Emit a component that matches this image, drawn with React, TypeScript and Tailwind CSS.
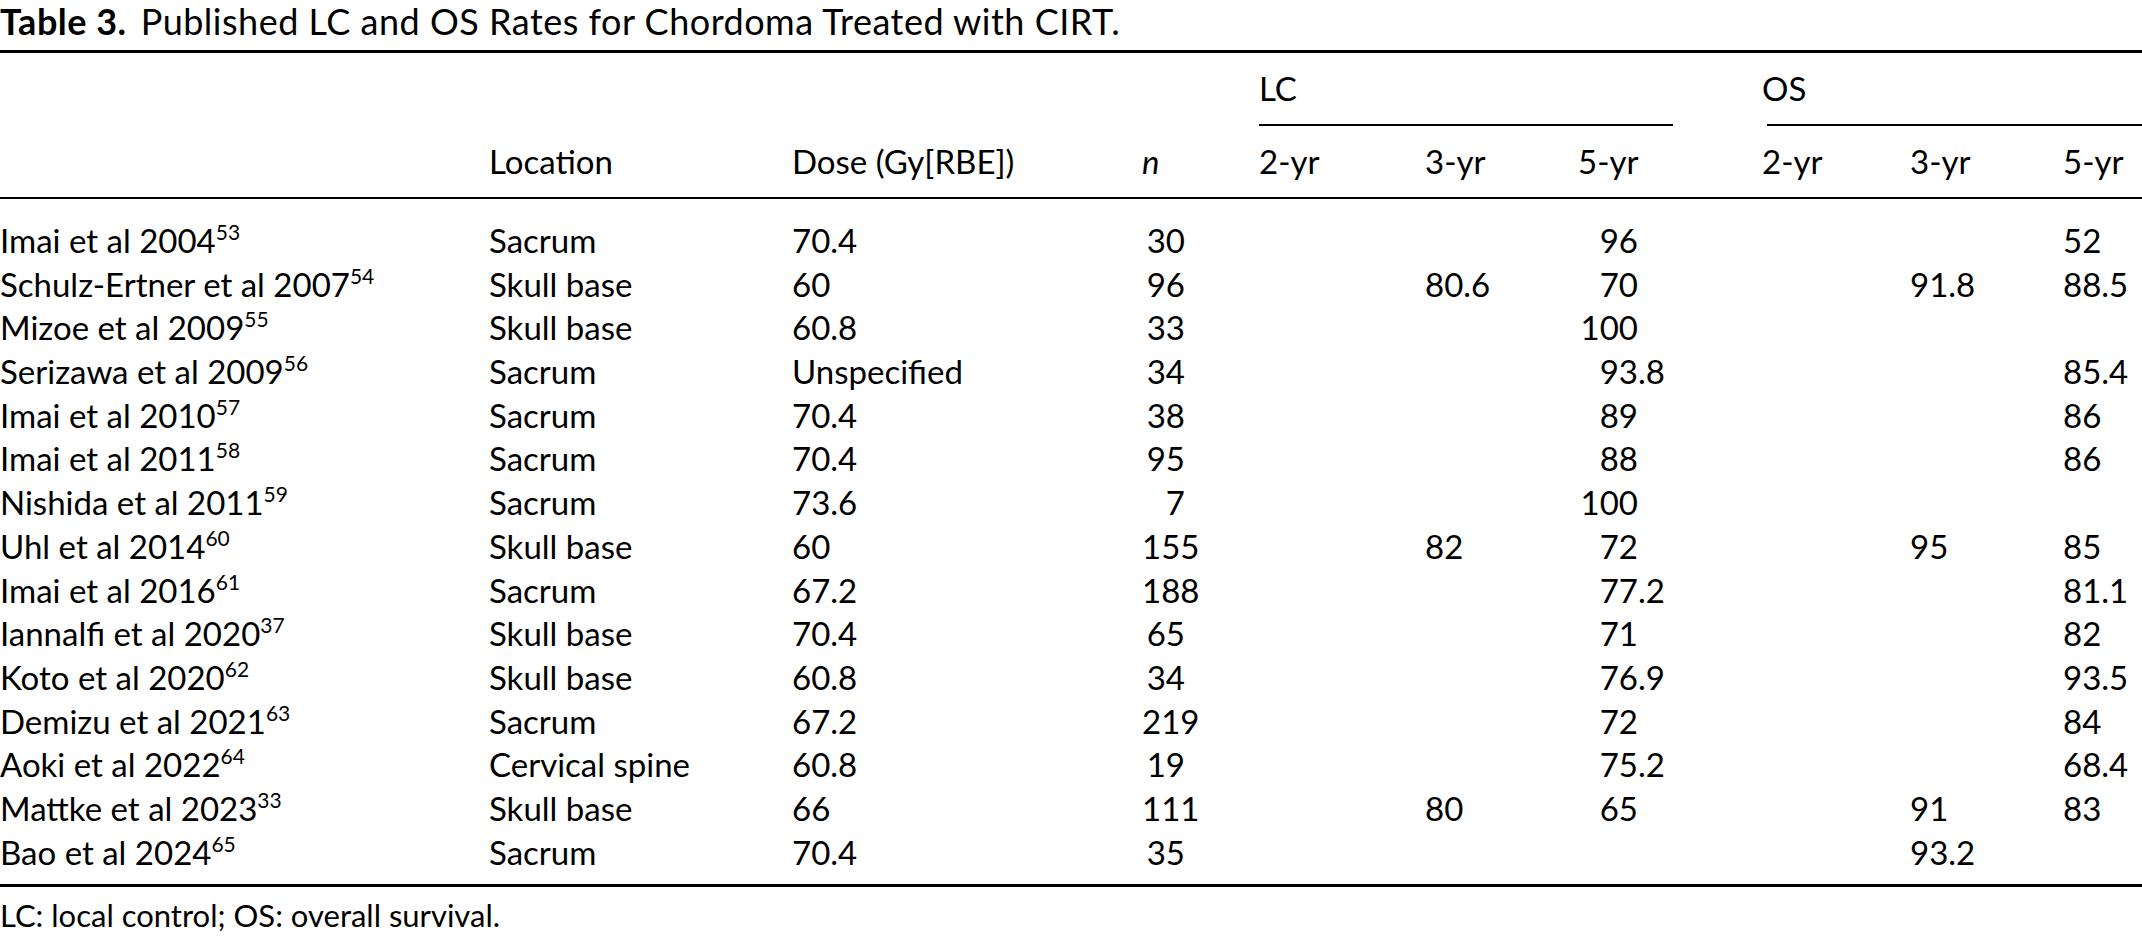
import React from "react";

type Row = {
  study: string;
  ref: string;
  loc: string;
  dose: string;
  n: string;
  lc2?: string;
  lc3?: string;
  lc5?: string;
  os2?: string;
  os3?: string;
  os5?: string;
};

const rows: Row[] = [
  { study: "Imai et al 2004", ref: "53", loc: "Sacrum", dose: "70.4", n: "30", lc5: "96", os5: "52" },
  { study: "Schulz-Ertner et al 2007", ref: "54", loc: "Skull base", dose: "60", n: "96", lc3: "80.6", lc5: "70", os3: "91.8", os5: "88.5" },
  { study: "Mizoe et al 2009", ref: "55", loc: "Skull base", dose: "60.8", n: "33", lc5: "100" },
  { study: "Serizawa et al 2009", ref: "56", loc: "Sacrum", dose: "Unspecified", n: "34", lc5: "93.8", os5: "85.4" },
  { study: "Imai et al 2010", ref: "57", loc: "Sacrum", dose: "70.4", n: "38", lc5: "89", os5: "86" },
  { study: "Imai et al 2011", ref: "58", loc: "Sacrum", dose: "70.4", n: "95", lc5: "88", os5: "86" },
  { study: "Nishida et al 2011", ref: "59", loc: "Sacrum", dose: "73.6", n: "7", lc5: "100" },
  { study: "Uhl et al 2014", ref: "60", loc: "Skull base", dose: "60", n: "155", lc3: "82", lc5: "72", os3: "95", os5: "85" },
  { study: "Imai et al 2016", ref: "61", loc: "Sacrum", dose: "67.2", n: "188", lc5: "77.2", os5: "81.1" },
  { study: "Iannalfi et al 2020", ref: "37", loc: "Skull base", dose: "70.4", n: "65", lc5: "71", os5: "82" },
  { study: "Koto et al 2020", ref: "62", loc: "Skull base", dose: "60.8", n: "34", lc5: "76.9", os5: "93.5" },
  { study: "Demizu et al 2021", ref: "63", loc: "Sacrum", dose: "67.2", n: "219", lc5: "72", os5: "84" },
  { study: "Aoki et al 2022", ref: "64", loc: "Cervical spine", dose: "60.8", n: "19", lc5: "75.2", os5: "68.4" },
  { study: "Mattke et al 2023", ref: "33", loc: "Skull base", dose: "66", n: "111", lc3: "80", lc5: "65", os3: "91", os5: "83" },
  { study: "Bao et al 2024", ref: "65", loc: "Sacrum", dose: "70.4", n: "35", os3: "93.2" },
];

const GRID =
  "grid grid-cols-[489px_303px_350px_117px_166px_153px_184px_148px_153px_1fr]";

function Dec({ v }: { v?: string }) {
  if (!v) return <div />;
  const [i, d] = v.split(".");
  return (
    <div className="flex">
      <span className="inline-block w-[60px] text-right">{i}</span>
      {d !== undefined && <span>.{d}</span>}
    </div>
  );
}

export default function App() {
  return (
    <div
      className="w-[2142px] overflow-hidden bg-white text-black text-[33px]"
      style={{ fontFamily: "Lato, 'Open Sans', sans-serif" }}
    >
      <div className="h-[50px] leading-[43px] whitespace-nowrap text-[36px] tracking-[0.5px]">
        <span className="font-bold">Table 3.</span>
        <span className="ml-[14px]">Published LC and OS Rates for Chordoma Treated with CIRT.</span>
      </div>
      <div className="h-[3px] bg-black" />
      {/* header row 1 */}
      <div className={`${GRID} h-[73px] items-center`}>
        <div />
        <div />
        <div />
        <div />
        <div className="col-span-3 h-full flex flex-col">
          <div className="flex-1 flex items-center">LC</div>
          <div className="h-[2px] bg-black w-[414px]" />
        </div>
        <div className="col-span-3 h-full flex flex-col">
          <div className="flex-1 flex items-center">OS</div>
          <div className="h-[2px] bg-black ml-[5px]" />
        </div>
      </div>
      {/* header row 2 */}
      <div className={`${GRID} h-[71px] items-center whitespace-nowrap`}>
        <div />
        <div>Location</div>
        <div>Dose (Gy[RBE])</div>
        <div className="italic">n</div>
        <div>2-yr</div>
        <div>3-yr</div>
        <div>5-yr</div>
        <div>2-yr</div>
        <div>3-yr</div>
        <div>5-yr</div>
      </div>
      <div className="h-[2px] bg-black" />
      <div className="pt-[17px] pb-[13px]">
        {rows.map((r) => (
          <div key={r.study} className={`${GRID} h-[43.7px] items-center whitespace-nowrap`}>
            <div>
              {r.study}
              <span className="relative -top-[13px] text-[21px] leading-none">{r.ref}</span>
            </div>
            <div>{r.loc}</div>
            <div>{r.dose}</div>
            <div className="w-[43px] text-right">{r.n}</div>
            <div>{r.lc2 ?? ""}</div>
            <div>{r.lc3 ?? ""}</div>
            <Dec v={r.lc5} />
            <div>{r.os2 ?? ""}</div>
            <div>{r.os3 ?? ""}</div>
            <div>{r.os5 ?? ""}</div>
          </div>
        ))}
      </div>
      <div className="h-[3px] bg-black" />
      <div className="pt-[10px] leading-[37px] text-[31px] whitespace-nowrap">
        LC: local control; OS: overall survival.
      </div>
    </div>
  );
}
